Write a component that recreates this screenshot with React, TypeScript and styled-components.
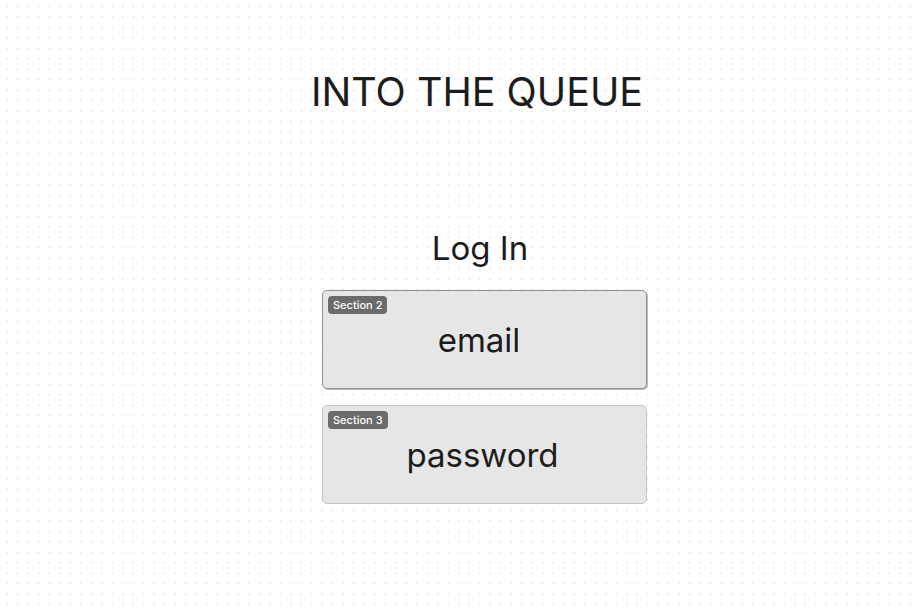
import React from "react";
import styled, { createGlobalStyle } from "styled-components";

const Global = createGlobalStyle`
  html, body { margin: 0; padding: 0; }
  body {
    font-family: Inter, "Noto Sans", sans-serif;
    color: #1c1c1c;
    background-color: #ffffff;
    background-image: radial-gradient(circle, #cfcfcf 0.7px, transparent 1px);
    background-size: 10.5px 10.5px;
    background-position: 2px 1px;
    min-height: 608px;
  }
`;

const Page = styled.main`
  width: 913px;
  height: 608px;
  display: flex;
  flex-direction: column;
  align-items: center;
  box-sizing: border-box;
  padding-left: 56px;
  padding-top: 68px;
`;

const Title = styled.h1`
  margin: 0 15px 0 0;
  font-size: 39.5px;
  font-weight: 400;
  line-height: 48px;
`;

const Heading = styled.h2`
  margin: 110px 9px 0 0;
  font-size: 33px;
  font-weight: 400;
  line-height: 44px;
`;

const Form = styled.div`
  margin-top: 20px;
  display: flex;
  flex-direction: column;
  gap: 16px;
`;

const Field = styled.div<{ $strong?: boolean }>`
  position: relative;
  width: 325px;
  height: 99px;
  box-sizing: border-box;
  background: #e6e6e6;
  border: 1px solid ${(p) => (p.$strong ? "#8f8f8f" : "#c4c4c4")};
  border-radius: 5px;
  box-shadow: ${(p) => (p.$strong ? "1px 1px 0 #bdbdbd" : "none")};
  display: flex;
  align-items: center;
  justify-content: center;
`;

const Badge = styled.span`
  position: absolute;
  top: 5px;
  left: 5px;
  background: #6b6b6b;
  color: #fff;
  font-size: 11px;
  font-weight: 500;
  line-height: 18px;
  padding: 0 5px;
  border-radius: 4px;
`;

const FieldLabel = styled.span<{ $shift: number }>`
  font-size: 33px;
  font-weight: 400;
  margin-top: 1px;
  margin-right: ${(p) => p.$shift * 2}px;
`;

export default function App() {
  return (
    <>
      <Global />
      <Page>
        <Title>INTO THE QUEUE</Title>
        <Heading>Log In</Heading>
        <Form>
          <Field $strong>
            <Badge>Section 2</Badge>
            <FieldLabel $shift={5.5}>email</FieldLabel>
          </Field>
          <Field>
            <Badge>Section 3</Badge>
            <FieldLabel $shift={2}>password</FieldLabel>
          </Field>
        </Form>
      </Page>
    </>
  );
}
